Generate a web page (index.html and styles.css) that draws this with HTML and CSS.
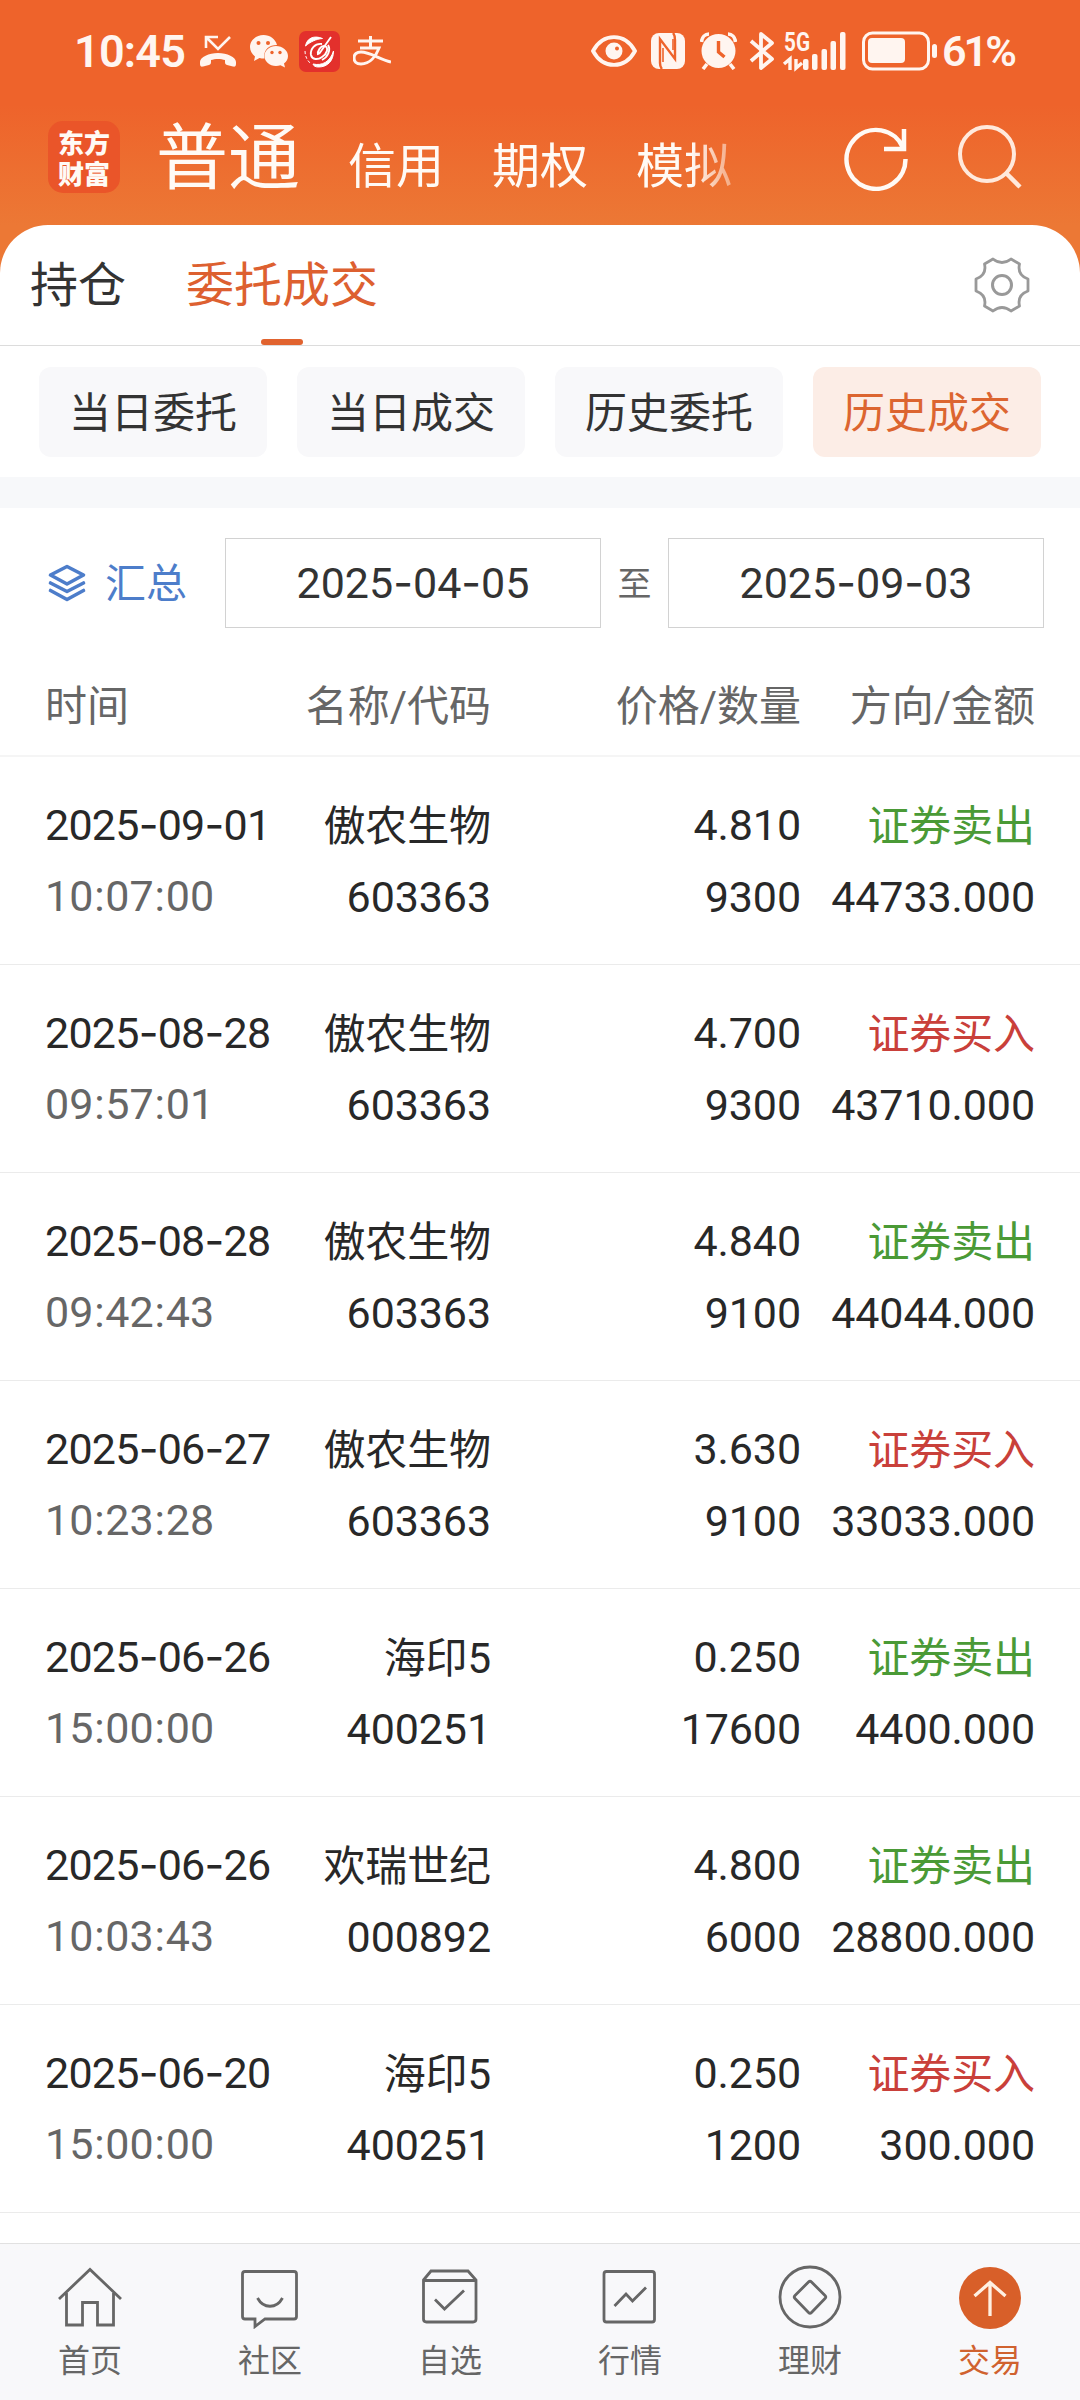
FILE: index.html
```html
<!DOCTYPE html>
<html lang="zh-CN">
<head>
  <meta charset="UTF-8" />
  <meta name="viewport" content="width=device-width, initial-scale=1.0"/>
  <title>历史成交</title>
  <link rel="stylesheet" href="styles.css">
</head>
<body>
  <header class="header">
    <div class="status-bar">
      <div class="status-left">
        <span class="clock">10:45</span>
        <svg class="icon-missed" width="38" height="34" viewBox="0 0 38 34">
          <path d="M7 14V3h12M8 4l11 11L31 3" fill="none" stroke="#fff5f0" stroke-width="2.6"/>
          <path d="M1 28c0-5 9-9 18-9s18 4 18 9v2c0 2-1 3-3 2.500l-6-1.500c-1.500-.5-2-1.500-2-3v-2c-4-1.500-10-1.500-14 0v2c0 1.500-.5 2.500-2 3l-6 1.500c-2 .5-3-.5-3-2.500z" fill="#fff5f0"/>
        </svg>
        <svg class="icon-wechat" width="38" height="34" viewBox="0 0 38 34">
          <path d="M13.500 1C6 1 0 6.500 0 13c0 4 2 7 5 9.500L4 27l5.500-3c1.500.5 3 .6 5 .6C13 17 18 11 27 11 25.500 5 20 1 13.500 1z" fill="#fff5f0"/>
          <path d="M26 12c-6.500 0-11.500 4.500-11.500 10S19.500 32 26 32c1.500 0 3-.3 4.500-.8L35 33.500l-1-4c2.500-2 4-4.500 4-7.500 0-5.500-5.500-10-12-10z" fill="#fff5f0"/>
          <g fill="#ee632b"><circle cx="8.500" cy="9" r="2"/><circle cx="18" cy="9" r="2"/><circle cx="22" cy="18.500" r="1.700"/><circle cx="30" cy="18.500" r="1.700"/></g>
        </svg>
        <svg class="icon-swirl" width="41" height="41" viewBox="0 0 41 41">
          <rect width="41" height="41" rx="7" fill="#e3302c"/>
          <path d="M6.500 15C8 7 15 4 23.500 7.500 17 8 11 11 6.500 15z" fill="#fff" stroke="#fff"/>
          <path d="M34.500 20c0 10-6 16-15 16-3 0-5-1-5.500-3 9 2 17-2 20.500-13z" fill="#fff" stroke="#fff"/>
          <path d="M23 13c-7-1-12 5-11 11 1 5 7 5 11 2 5-3 7-9 3-11-4-1-8 5-7 9M32 6L20 23M29 14c3 5 0 12-6 15" fill="none" stroke="#fff" stroke-width="1.900"/>
          <path d="M6 20c0 5 2 9 5 12" fill="none" stroke="#fff" stroke-dasharray="3 2"/>
        </svg>
        <svg class="icon-alipay" width="38" height="30" viewBox="0 0 38 30">
          <path d="M5 5h25M17.500 0v12M7 12h19c-3 8-9 16-18 16-5 0-7-3-7-6 0-4 3-6 7-6 9 0 18 7 30 10" fill="none" stroke="#fff5f0" stroke-width="3"/>
        </svg>
      </div>
      <div class="status-right">
        <svg class="icon-eye" width="46" height="32" viewBox="0 0 46 32">
          <path d="M2 16C12-2.500 34-2.500 44 16 34 34.500 12 34.500 2 16z" fill="none" stroke="#fff5f0" stroke-width="3.800"/>
          <circle cx="23" cy="16" r="8.500" fill="#fff5f0"/><circle cx="26" cy="13.500" r="2" fill="#ee632b"/>
        </svg>
        <svg class="icon-nfc" width="34" height="36" viewBox="0 0 34 36">
          <rect width="34" height="36" rx="8" fill="#fff5f0"/>
          <path d="M11 36q-2-2-2-6V6l15 20V7q0-5-2-7" fill="none" stroke="#ee632b" stroke-width="2.400"/>
          <path d="M12 29V15M22 6v11" fill="none" stroke="#ee632b" stroke-width="1.600"/>
        </svg>
        <svg class="icon-alarm" width="37" height="38" viewBox="0 0 37 38">
          <circle cx="18.500" cy="19" r="17" fill="#fff5f0"/>
          <path d="M1.500 10C2 5 5 2 9 2M35.500 10C35 5 32 2 28 2M7 32l-4 5M30 32l4 5" fill="none" stroke="#fff5f0" stroke-width="3.600"/>
          <path d="M18.500 9v11l6 5" fill="none" stroke="#ee632b" stroke-width="3.400"/>
        </svg>
        <svg class="icon-bluetooth" width="26" height="40" viewBox="0 0 26 40">
          <path d="M2 10l21 18-11 9V3l11 9L2 30" fill="none" stroke="#fff5f0" stroke-width="3.800" stroke-linejoin="round"/>
        </svg>
        <svg class="icon-signal" width="62" height="40" viewBox="0 0 62 40">
          <text x="0" y="20" class="network" textLength="26" lengthAdjust="spacingAndGlyphs">5G</text>
          <path d="M0 33l6-5v11M18 32l-6 5V28" fill="none" stroke="#fff5f0" stroke-width="3.400"/>
          <g fill="#fff5f0">
            <rect x="19" y="28" width="5.500" height="11" rx="2"/>
            <rect x="28" y="23" width="5.500" height="16" rx="2"/>
            <rect x="37.500" y="18" width="5.500" height="21" rx="2"/>
            <rect x="46.500" y="10" width="5.500" height="29" rx="2"/>
            <rect x="56" y="1" width="5.500" height="38" rx="2"/>
          </g>
        </svg>
        <svg class="icon-battery" width="76" height="40" viewBox="0 0 76 40">
          <rect x="1.500" y="2" width="65" height="36" rx="9" fill="none" stroke="#fff5f0" stroke-width="3"/>
          <rect x="6" y="7" width="37" height="25" rx="4" fill="#fff5f0"/>
          <rect x="70" y="13" width="5" height="14" rx="2.500" fill="#fff5f0"/>
        </svg>
        <span class="percent">61%</span>
      </div>
    </div>

    <div class="top-nav">
      <div class="logo">东方<br>财富</div>
      <nav class="accounts">
        <a class="current">普通</a>
        <a>信用</a>
        <a>期权</a>
        <a>模拟</a>
      </nav>
      <svg class="refresh" width="66" height="66" viewBox="0 0 66 66">
        <path d="M62.500 34A29.500 29.500 0 1 1 60 22.500M61 4v20H41" fill="none" stroke="#fffaf5" stroke-width="4.500"/>
      </svg>
      <svg class="search" width="66" height="66" viewBox="0 0 66 66">
        <circle cx="30" cy="29" r="27" fill="none" stroke="#ffe9dc" stroke-width="4"/>
        <path d="M49 48l14 14" stroke="#ffe9dc" stroke-width="4.500"/>
      </svg>
    </div>
  </header>

  <main class="sheet">
    <div class="tabs">
      <a class="tab">持仓</a>
      <a class="tab active">委托成交</a>
      <svg class="settings" width="56" height="56" viewBox="-28 -28 56 56">
        <path d="M-9-26Q0-19 9-26L17.500-21Q15-10 26-6V6Q15 10 17.500 21L9 26Q0 19-9 26L-17.500 21Q-15 10-26 6V-6Q-15-10-17.500-21Z" fill="none" stroke="#999" stroke-width="2.800" stroke-linejoin="round"/>
        <circle r="9.500" fill="none" stroke="#999" stroke-width="3"/>
      </svg>
    </div>

    <div class="chips">
      <a class="chip">当日委托</a>
      <a class="chip">当日成交</a>
      <a class="chip">历史委托</a>
      <a class="chip active">历史成交</a>
    </div>

    <div class="filter">
      <a class="summary">
        <svg width="38" height="40" viewBox="0 0 38 40">
          <path d="M19 3.500L35.500 12 19 21 2.500 12zM2.500 20L19 28.500 35.500 20M2.500 27.500L19 36.500l16.500-9" fill="none" stroke="#4d7dca" stroke-width="3.600" stroke-linejoin="round" stroke-linecap="round"/>
        </svg>
        <span>汇总</span>
      </a>
      <div class="date-box num">2025<span class="dash">-</span>04<span class="dash">-</span>05</div>
      <span class="to">至</span>
      <div class="date-box num">2025<span class="dash">-</span>09<span class="dash">-</span>03</div>
    </div>

    <div class="table-head">
      <span>时间</span>
      <span>名称/代码</span>
      <span>价格/数量</span>
      <span>方向/金额</span>
    </div>
    <div id="deals"></div>
  </main>

  <nav class="bottom-nav">
    <a>
      <svg width="64" height="64" viewBox="0 0 64 64"><path d="M1 34L32 4.500 63 34M8.500 28v32h16V37.500h15V60h16V28"/></svg>
      首页
    </a>
    <a>
      <svg width="64" height="64" viewBox="0 0 64 64"><path d="M7 6.500h49q2.500 0 2.500 2.500v42.500q0 2.500-2.500 2.500H27l-10 7.500V54H7q-2.500 0-2.500-2.500V9q0-2.500 2.500-2.500zM19.500 33c6 11 19 11 25 0"/></svg>
      社区
    </a>
    <a>
      <svg width="64" height="64" viewBox="0 0 64 64"><path d="M5.500 15L13 6h37l8 9v39q0 3-3 3H8.500q-3 0-3-3zM5.500 15.500H58M17 34.500l9.500 9.500L46 25.500"/></svg>
      自选
    </a>
    <a>
      <svg width="64" height="64" viewBox="0 0 64 64"><rect x="6" y="6.500" width="50.500" height="50.500" rx="2.500"/><path d="M16.500 41L28 29l6.500 7L48 22.500"/></svg>
      行情
    </a>
    <a>
      <svg width="64" height="64" viewBox="0 0 64 64"><circle cx="32" cy="32" r="30"/><path d="M30.500 17q1.500-1.500 3 0L47 30.500q1.500 1.500 0 3L33.500 47.500q-1.500 1.500-3 0L17 33.500q-1.500-1.500 0-3z"/></svg>
      理财
    </a>
    <a class="active">
      <svg width="64" height="64" viewBox="0 0 64 64"><circle class="disc" cx="32" cy="33" r="31"/><path class="arrow" d="M32 51V17M16.500 31L32 17.500 47.500 31"/></svg>
      交易
    </a>
  </nav>

  <script src="script.js"></script>
</body>
</html>
```
FILE: styles.css
```css
* {
  box-sizing: border-box;
}

body {
  margin: 0;
  width: 1080px;
  height: 2400px;
  display: flex;
  flex-direction: column;
  overflow: hidden;
  background: #fff;
  color: #282828;
  font-family: Roboto, "Noto Sans CJK SC", sans-serif;
  font-size: 42px;
}

svg {
  display: block;
  flex: none;
}

.header {
  height: 273px;
  flex: none;
  background: linear-gradient(#ee632b 105px, #ec7835 225px);
}

.status-bar {
  height: 102px;
  padding: 0 65px 0 74px;
  display: flex;
  justify-content: space-between;
  align-items: center;
  color: #fff5f0;
  font-size: 45px;
  font-weight: 600;
}

.status-left,
.status-right {
  display: flex;
  align-items: center;
}

.clock {
  width: 125px;
  letter-spacing: -0.800px;
}

.icon-wechat {
  margin-left: 13px;
}

.icon-swirl {
  margin-left: 11px;
}

.icon-alipay {
  margin-left: 13px;
}

.icon-nfc {
  margin-left: 14px;
}

.icon-alarm {
  margin-left: 15px;
}

.icon-bluetooth {
  margin-left: 12px;
}

.icon-signal {
  margin-left: 9px;
  overflow: visible;
}

.icon-battery {
  margin-left: 16px;
}

.network {
  font-size: 25px;
  font-weight: 700;
  fill: #fff5f0;
}

.percent {
  width: 73px;
  margin-left: 4px;
  font-size: 43px;
  letter-spacing: -3px;
  white-space: nowrap;
}

.top-nav {
  height: 123px;
  padding-left: 48px;
  display: flex;
  align-items: flex-start;
  color: #fffaf5;
}

.logo {
  width: 72px;
  height: 72px;
  margin-top: 19px;
  padding-top: 5px;
  border-radius: 15px;
  background: #ea5529;
  text-align: center;
  font-family: "Noto Sans CJK SC", sans-serif;
  font-size: 26px;
  font-weight: 900;
  line-height: 31px;
}

.accounts {
  width: 640px;
  margin: 3px 0 0 36px;
  display: flex;
  align-items: baseline;
  gap: 48px;
  font-size: 48px;
  line-height: 108px;
  -webkit-mask-image: linear-gradient(to right, #000 535px, transparent 605px);
  mask-image: linear-gradient(to right, #000 535px, transparent 605px);
}

.accounts .current {
  font-size: 72px;
}

.refresh {
  margin: 23px 0 0 47px;
}

.search {
  margin: 23px 0 0 48px;
}

.sheet {
  flex: 1;
  margin-top: -48px;
  background: #fff;
  border-radius: 48px 48px 0 0;
}

.tabs {
  height: 121px;
  padding: 0 50px 0 30px;
  display: flex;
  align-items: center;
  gap: 60px;
  border-bottom: 1px solid #dcdcdc;
  font-size: 48px;
}

.tab {
  height: 120px;
  line-height: 122px;
  color: #333;
}

.tab.active {
  color: #dd6030;
  display: flex;
  flex-direction: column;
  align-items: center;
}

.tab.active::after {
  content: "";
  width: 42px;
  height: 6px;
  margin-top: -8px;
  flex: none;
  border-radius: 3px;
  background: #e1632f;
}

.settings {
  margin-left: auto;
}

.chips {
  padding: 21px 39px 20px;
  display: grid;
  grid-template-columns: repeat(4, 1fr);
  gap: 30px;
  border-bottom: 31px solid #f7f8fa;
}

.chip {
  height: 90px;
  line-height: 93px;
  border-radius: 12px;
  background: #f8f8fa;
  color: #333;
  text-align: center;
}

.chip.active {
  background: #fcede6;
  color: #dc6530;
}

.filter {
  padding: 30px 36px 0 48px;
  display: flex;
  align-items: center;
}

.summary {
  width: 177px;
  display: flex;
  align-items: center;
  gap: 19px;
  color: #4d7dca;
  white-space: nowrap;
}

.summary span {
  padding-bottom: 6px;
  font-size: 41px;
}

.date-box {
  width: 376px;
  height: 90px;
  line-height: 86px;
  border: 1px solid #d2d2d2;
  text-align: center;
  color: #333;
}

.to {
  flex: 1;
  padding-bottom: 3px;
  text-align: center;
  font-size: 34px;
  color: #666;
}

.num {
  font-family: Roboto, "Noto Sans CJK SC", sans-serif;
  font-size: 43px;
}

.dash {
  font-family: Inter, sans-serif;
}

.colon {
  padding: 0 0.800px;
}

.table-head,
.row {
  padding: 0 45px;
  display: grid;
  grid-template-columns: 240px 206px 310px 234px;
}

.table-head {
  height: 129px;
  padding-top: 29px;
  border-bottom: 2px solid #f5f5f5;
  line-height: 100px;
  color: #666;
}

.table-head span + span,
.cell + .cell {
  text-align: right;
}

.row {
  height: 208px;
  padding-top: 32px;
  border-bottom: 1px solid #ebebeb;
}

.cell {
  display: flex;
  flex-direction: column;
  line-height: 72px;
  white-space: nowrap;
}

.cell + .cell {
  letter-spacing: -0.100px;
}

.date {
  height: 72px;
  line-height: 70px;
  letter-spacing: -0.750px;
}

.time {
  height: 72px;
  line-height: 71px;
  color: #666;
}

.name,
.side {
  height: 72px;
  line-height: 75px;
  font-size: 42px;
}

.sell {
  color: #4a9a36;
}

.buy {
  color: #c9403a;
}

.bottom-nav {
  height: 157px;
  flex: none;
  padding-top: 21px;
  display: grid;
  grid-template-columns: repeat(6, 1fr);
  border-top: 1px solid #e1e1e1;
  background: #f8f8fa;
  position: relative;
}

.bottom-nav a {
  display: flex;
  flex-direction: column;
  align-items: center;
  color: #666;
  font-size: 32px;
  line-height: 64px;
}

.bottom-nav svg {
  fill: none;
  stroke: #666;
  stroke-width: 2.800;
}

.bottom-nav .active {
  color: #d0622f;
}

.bottom-nav .disc {
  fill: #d85f29;
  stroke: none;
}

.bottom-nav .arrow {
  stroke: #fff0e2;
  stroke-width: 3.300;
}
```
FILE: script.js
```js
const deals = [
  ["2025-09-01", "10:07:00", "傲农生物", "603363", "4.810", "9300", "sell", "44733.000"],
  ["2025-08-28", "09:57:01", "傲农生物", "603363", "4.700", "9300", "buy", "43710.000"],
  ["2025-08-28", "09:42:43", "傲农生物", "603363", "4.840", "9100", "sell", "44044.000"],
  ["2025-06-27", "10:23:28", "傲农生物", "603363", "3.630", "9100", "buy", "33033.000"],
  ["2025-06-26", "15:00:00", "海印5", "400251", "0.250", "17600", "sell", "4400.000"],
  ["2025-06-26", "10:03:43", "欢瑞世纪", "000892", "4.800", "6000", "sell", "28800.000"],
  ["2025-06-20", "15:00:00", "海印5", "400251", "0.250", "1200", "buy", "300.000"],
];

const sides = { sell: "证券卖出", buy: "证券买入" };

const rows = deals.map(([date, time, name, code, price, count, side, amount]) => `
  <div class="row num">
    <div class="cell">
      <span class="date">${date.replace(/-/g, '<span class="dash">-</span>')}</span>
      <span class="time">${time.replace(/:/g, '<span class="colon">:</span>')}</span>
    </div>
    <div class="cell"><span class="name">${name}</span><span>${code}</span></div>
    <div class="cell"><span>${price}</span><span>${count}</span></div>
    <div class="cell"><span class="side ${side}">${sides[side]}</span><span>${amount}</span></div>
  </div>`);

document.getElementById("deals").innerHTML = rows.join("");
```
